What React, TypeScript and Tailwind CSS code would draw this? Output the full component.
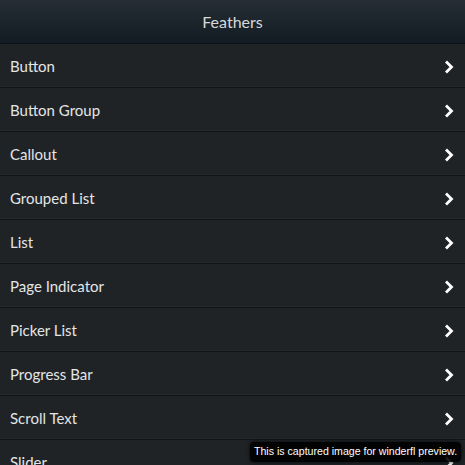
const items = [
  "Button",
  "Button Group",
  "Callout",
  "Grouped List",
  "List",
  "Page Indicator",
  "Picker List",
  "Progress Bar",
  "Scroll Text",
  "Slider",
];

function Chevron() {
  return (
    <svg width="10" height="14" viewBox="0 0 10 14" className="text-white">
      <path d="M2 2.5l4.5 4.5-4.5 4.5" fill="none" stroke="currentColor" strokeWidth="2.8" strokeLinecap="square" />
    </svg>
  );
}

export default function App() {
  return (
    <div className="relative w-[465px] h-[465px] overflow-hidden bg-[#1f2326] font-['Lato',sans-serif]">
      <div className="h-[44px] flex items-center justify-center bg-gradient-to-b from-[#272e35] to-[#121b23] border-b border-[#0d1014]">
        <span className="text-[16px] text-[#d5d9dc]">Feathers</span>
      </div>
      <div className="flex flex-col">
        {items.map((label) => (
          <div
            key={label}
            className="h-[44px] shrink-0 flex items-center justify-between pl-[10px] pr-[10px] pt-[2px] border-b border-[#111416] shadow-[inset_0_-1px_0_#262a2d]"
          >
            <span className="text-[15px] text-[#e3e5e6]">{label}</span>
            <Chevron />
          </div>
        ))}
      </div>
      <div className="absolute left-[250px] top-[442px] h-[20px] px-[4px] flex items-center rounded-[4px] bg-black/90 shadow-[0_0_4px_rgba(0,0,0,0.8)]">
        <span className="text-[10.6px] text-white font-['Liberation_Sans',sans-serif] whitespace-nowrap">
          This is captured image for winderfl preview.
        </span>
      </div>
    </div>
  );
}
